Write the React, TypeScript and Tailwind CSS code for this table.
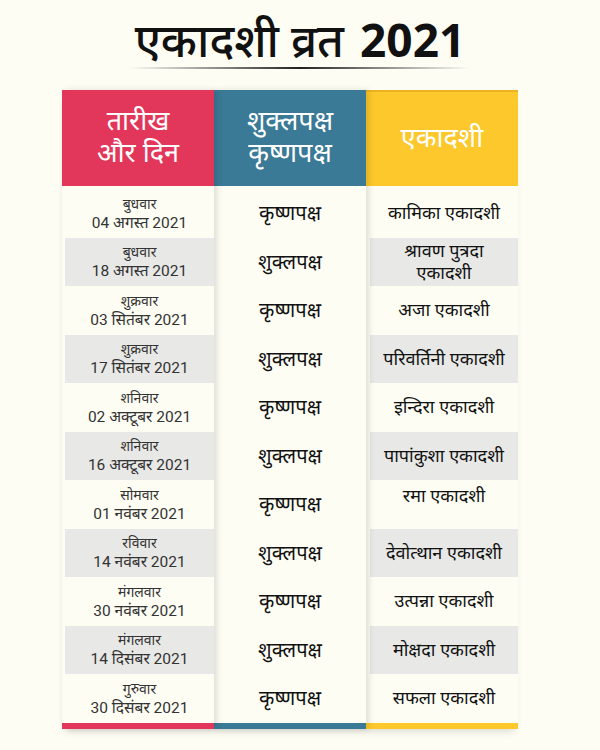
const rows = [
  { day: "बुधवार", date: "04 अगस्त 2021", paksha: "कृष्णपक्ष", name: ["कामिका एकादशी"] },
  { day: "बुधवार", date: "18 अगस्त 2021", paksha: "शुक्लपक्ष", name: ["श्रावण पुत्रदा", "एकादशी"] },
  { day: "शुक्रवार", date: "03 सितंबर 2021", paksha: "कृष्णपक्ष", name: ["अजा एकादशी"] },
  { day: "शुक्रवार", date: "17 सितंबर 2021", paksha: "शुक्लपक्ष", name: ["परिवर्तिनी एकादशी"] },
  { day: "शनिवार", date: "02 अक्टूबर 2021", paksha: "कृष्णपक्ष", name: ["इन्दिरा एकादशी"] },
  { day: "शनिवार", date: "16 अक्टूबर 2021", paksha: "शुक्लपक्ष", name: ["पापांकुशा एकादशी"] },
  { day: "सोमवार", date: "01 नवंबर 2021", paksha: "कृष्णपक्ष", name: ["रमा एकादशी"], top: true },
  { day: "रविवार", date: "14 नवंबर 2021", paksha: "शुक्लपक्ष", name: ["देवोत्थान एकादशी"] },
  { day: "मंगलवार", date: "30 नवंबर 2021", paksha: "कृष्णपक्ष", name: ["उत्पन्ना एकादशी"] },
  { day: "मंगलवार", date: "14 दिसंबर 2021", paksha: "शुक्लपक्ष", name: ["मोक्षदा एकादशी"] },
  { day: "गुरुवार", date: "30 दिसंबर 2021", paksha: "कृष्णपक्ष", name: ["सफला एकादशी"] },
];

export default function App() {
  return (
    <div
      className="w-[600px] h-[750px] bg-[#fdfdf4] flex flex-col items-center"
      style={{ fontFamily: '"Noto Sans", "Liberation Sans", sans-serif' }}
    >
      {/* Title */}
      <h1 className="mt-[14px] h-[50px] flex items-center gap-[16px] text-[#111] leading-none">
        <span className="text-[46px] font-medium">एकादशी व्रत</span>
        <span className="text-[46px] font-bold">2021</span>
      </h1>
      <div className="mt-[3px] w-[340px] h-[2px] bg-gradient-to-r from-transparent via-[#222] to-transparent" />

      {/* Table */}
      <div className="mt-[21px] self-start ml-[62px] w-[456px] flex shadow-[0_6px_8px_-4px_rgba(0,0,0,0.15)]">
        {/* Date column */}
        <div className="relative z-20 w-[152px] flex flex-col bg-[#fdfdf4] shadow-[3px_0_6px_rgba(0,0,0,0.12)]">
          <div className="h-[96px] bg-[#e2375a] flex items-center justify-center text-center text-white text-[27px] leading-[32px] pb-[4px]">
            <p>
              तारीख
              <br />
              और दिन
            </p>
          </div>
          <div className="pt-[3px] pl-[3px] flex flex-col">
            {rows.map((r, i) => (
              <div
                key={i}
                className={`h-[48.5px] flex flex-col items-center justify-center text-[#333] ${i % 2 === 1 ? "bg-[#e8e8e6]" : ""}`}
              >
                <span className="text-[14px] leading-[19px]">{r.day}</span>
                <span className="text-[15.5px] leading-[20px]" style={{ fontFamily: '"Roboto", "Noto Sans", sans-serif' }}>{r.date}</span>
              </div>
            ))}
          </div>
          <div className="h-[6px] bg-[#e2375a]" />
        </div>

        {/* Paksha column */}
        <div className="relative z-10 w-[152px] flex flex-col bg-[#fdfdf4] shadow-[3px_0_6px_rgba(0,0,0,0.12)]">
          <div className="h-[96px] bg-[#3a7a96] flex items-center justify-center text-center text-white text-[27px] leading-[32px] pb-[4px]">
            <p>
              शुक्लपक्ष
              <br />
              कृष्णपक्ष
            </p>
          </div>
          <div className="pt-[3px] flex flex-col">
            {rows.map((r, i) => (
              <div key={i} className="h-[48.5px] flex items-center justify-center text-[#111] text-[20px]">
                {r.paksha}
              </div>
            ))}
          </div>
          <div className="h-[6px] bg-[#3a7a96]" />
        </div>

        {/* Ekadashi column */}
        <div className="relative w-[152px] flex flex-col bg-[#fdfdf4]">
          <div className="h-[96px] bg-[#fcc82b] border-t-[2px] border-[#e9b424] flex items-center justify-center text-white text-[27px] pb-[4px]">
            एकादशी
          </div>
          <div className="pt-[3px] pl-[4px] flex flex-col">
            {rows.map((r, i) => (
              <div
                key={i}
                className={`h-[48.5px] flex flex-col items-center ${r.top ? "justify-start pt-[4px]" : "justify-center pb-[2px]"} text-[#111] text-[18px] leading-[22px] whitespace-nowrap text-center ${i % 2 === 1 ? "bg-[#e8e8e6]" : ""}`}
              >
                <p>
                  {r.name[0]}
                  {r.name[1] && (
                    <>
                      <br />
                      {r.name[1]}
                    </>
                  )}
                </p>
              </div>
            ))}
          </div>
          <div className="h-[6px] bg-[#fcc82b]" />
        </div>
      </div>
    </div>
  );
}
